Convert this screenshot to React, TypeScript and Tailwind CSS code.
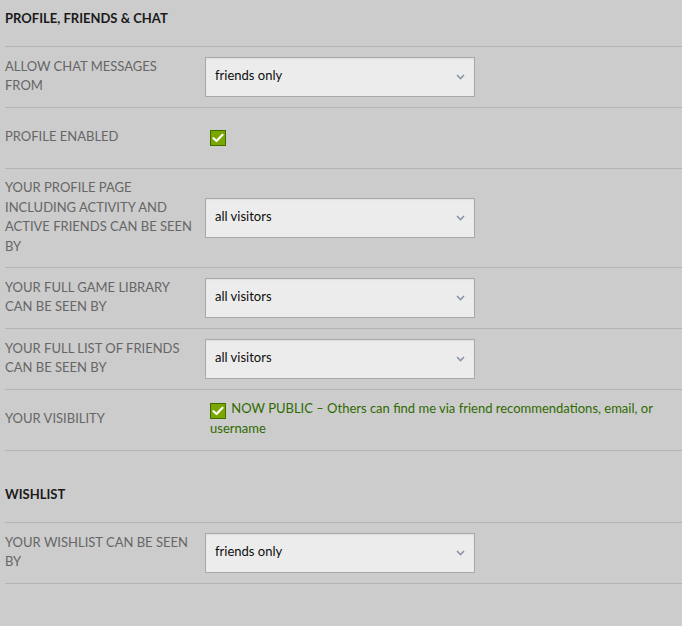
const rows = [
  { label: 'ALLOW CHAT MESSAGES FROM', kind: 'select', value: 'friends only' },
  { label: 'PROFILE ENABLED', kind: 'check' },
  { label: 'YOUR PROFILE PAGE INCLUDING ACTIVITY AND ACTIVE FRIENDS CAN BE SEEN BY', kind: 'select', value: 'all visitors' },
  { label: 'YOUR FULL GAME LIBRARY CAN BE SEEN BY', kind: 'select', value: 'all visitors' },
  { label: 'YOUR FULL LIST OF FRIENDS CAN BE SEEN BY', kind: 'select', value: 'all visitors' },
  { label: 'YOUR VISIBILITY', kind: 'visibility' },
];

const wishlist = [{ label: 'YOUR WISHLIST CAN BE SEEN BY', kind: 'select', value: 'friends only' }];

function Check() {
  return (
    <span className="inline-flex h-[16px] w-[16px] shrink-0 items-center justify-center border border-[#3f6d00] bg-[#79a600] align-[-3px]">
      <svg width="12" height="10" viewBox="0 0 12 10" fill="none">
        <path d="M1.5 5.2 L4.5 8 L10.5 1.8" stroke="#fff" strokeWidth="2.2" strokeLinecap="round" strokeLinejoin="round" />
      </svg>
    </span>
  );
}

function Select({ value }: { value: string }) {
  return (
    <div className="flex h-[40px] w-[270px] items-center justify-between border border-[#a9a9a9] bg-[#ececec] pl-[9px] pr-[9px] shadow-[inset_0_1px_2px_rgba(0,0,0,0.06)]">
      <span className="-mt-[2px] text-[13px] text-[#0d0d0d]">{value}</span>
      <svg width="9" height="6" viewBox="0 0 9 6" fill="none">
        <path d="M1 1 L4.5 4.5 L8 1" stroke="#8c96a0" strokeWidth="1.6" />
      </svg>
    </div>
  );
}

type Row = { label: string; kind: string; value?: string };

function SettingRow({ row }: { row: Row }) {
  return (
    <div className="flex min-h-[61px] items-center border-t border-[#b4b4b4] py-[10px]">
      <div className="-mt-[1px] mb-[1px] w-[200px] shrink-0 pr-[10px] text-[13px] leading-[19.5px] text-[#666]">{row.label}</div>
      <div className="flex-1">
        {row.kind === 'select' && <Select value={row.value!} />}
        {row.kind === 'check' && (
          <div className="flex pl-[5px]">
            <Check />
          </div>
        )}
        {row.kind === 'visibility' && (
          <p className="-mt-[1px] mb-[1px] pl-[5px] pr-[10px] text-[13px] leading-[19.5px] text-[#2f6a00]">
            <Check /> <span className="ml-[2px]">NOW PUBLIC – Others can find me via friend recommendations, email, or username</span>
          </p>
        )}
      </div>
    </div>
  );
}

function Section({ title, items, first }: { title: string; items: Row[]; first?: boolean }) {
  return (
    <section className={first ? '' : 'mt-[25px]'}>
      <h2 className="h-[46px] pt-[8px] text-[13px] leading-5 font-bold text-[#1a1a1a]">{title}</h2>
      <div className="border-b border-[#b4b4b4]">
        {items.map((r) => (
          <SettingRow key={r.label} row={r} />
        ))}
      </div>
    </section>
  );
}

export default function App() {
  return (
    <div className="min-h-[626px] bg-[#cccccc] pl-[5px]" style={{ fontFamily: 'Lato, "Open Sans", sans-serif' }}>
      <Section title="PROFILE, FRIENDS & CHAT" items={rows} first />
      <Section title="WISHLIST" items={wishlist} />
    </div>
  );
}
